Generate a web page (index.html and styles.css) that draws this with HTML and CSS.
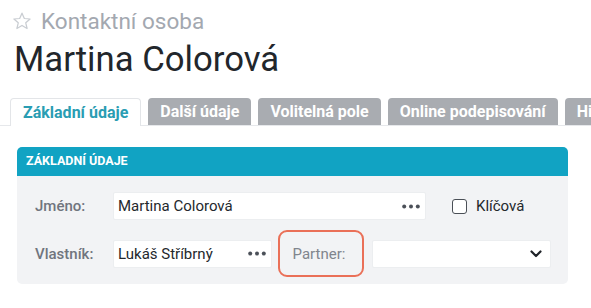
FILE: index.html
```html
<!DOCTYPE html>
<html lang="cs">
<head>
<meta charset="utf-8">
<link rel="stylesheet" href="styles.css">
</head>
<body>
<header class="page-head">
  <div class="subtitle">
    <svg class="star" width="20" height="20" viewBox="0 0 24 24"><path d="M12 2.6l2.8 6.4 6.9.6-5.2 4.6 1.6 6.8L12 17.4 5.9 21l1.6-6.8L2.3 9.6l6.9-.6z" fill="none" stroke="#c9cdd2" stroke-width="1.5" stroke-linejoin="round"/></svg>
    <span>Kontaktní osoba</span>
  </div>
  <h1 class="title">Martina Colorová</h1>
</header>

<nav class="tabs">
  <div class="tab active">Základní údaje</div>
  <div class="tab">Další údaje</div>
  <div class="tab">Volitelná pole</div>
  <div class="tab">Online podepisování</div>
  <div class="tab">Historie</div>
</nav>

<section class="panel">
  <div class="panel-head">ZÁKLADNÍ ÚDAJE</div>
  <div class="panel-body">
    <div class="row row-1">
      <label class="lbl">Jméno:</label>
      <div class="input input-name"><span>Martina Colorová</span>
        <svg class="dots" width="18" height="5" viewBox="0 0 18 5"><circle cx="2.2" cy="2.5" r="2" fill="#4b5058"/><circle cx="9" cy="2.5" r="2" fill="#4b5058"/><circle cx="15.8" cy="2.5" r="2" fill="#4b5058"/></svg>
      </div>
      <div class="check"><span class="box"></span><span>Klíčová</span></div>
    </div>
    <div class="row row-2">
      <label class="lbl">Vlastník:</label>
      <div class="input input-owner"><span>Lukáš Stříbrný</span>
        <svg class="dots" width="18" height="5" viewBox="0 0 18 5"><circle cx="2.2" cy="2.5" r="2" fill="#4b5058"/><circle cx="9" cy="2.5" r="2" fill="#4b5058"/><circle cx="15.8" cy="2.5" r="2" fill="#4b5058"/></svg>
      </div>
      <div class="partner">Partner:</div>
      <div class="input select"><span></span>
        <svg width="12" height="8" viewBox="0 0 12 8"><path d="M1.5 1.5L6 6l4.5-4.5" fill="none" stroke="#1f2328" stroke-width="2.2" stroke-linecap="round" stroke-linejoin="round"/></svg>
      </div>
    </div>
  </div>
</section>
</body>
</html>
```

FILE: styles.css
```css
html, body {
  margin: 0;
  padding: 0;
  background: #ffffff;
  font-family: Roboto, "Liberation Sans", Arial, sans-serif;
  overflow: hidden;
}

.page-head {
  padding: 8px 0 0 12px;
}

.subtitle {
  display: flex;
  align-items: center;
  gap: 9px;
  color: #a3a8b0;
  font-size: 22.5px;
  line-height: 26px;
}

.star {
  display: block;
  margin-top: -1px;
}

.title {
  margin: 5px 0 0 2px;
  font-size: 34.7px;
  font-weight: 400;
  line-height: 40px;
  color: #22262b;
  letter-spacing: 0;
}

.tabs {
  display: flex;
  align-items: flex-start;
  gap: 7px;
  margin-top: 19px;
  padding-left: 10px;
  height: 28px;
  overflow: hidden;
  white-space: nowrap;
  background: linear-gradient(#e6e8eb, #e6e8eb) left bottom / 100% 1px no-repeat;
}

.tab {
  flex: none;
  height: 27px;
  padding: 0 12px;
  box-sizing: border-box;
  border-radius: 4px 4px 0 0;
  background: #a9acb1;
  color: #ffffff;
  font-weight: 700;
  font-size: 16px;
  line-height: 28px;
}

.tab.active {
  background: #ffffff;
  color: #2a9db3;
  border: 1px solid #e3e5e8;
  border-bottom: none;
  height: 28px;
  line-height: 27px;
  padding: 0 12px;
}

.panel {
  margin: 21px 0 0 17px;
  width: 551px;
}

.panel-head {
  height: 29px;
  background: #11a3c3;
  border-radius: 5px 5px 0 0;
  color: #ffffff;
  font-weight: 700;
  font-size: 12.5px;
  line-height: 27px;
  padding-left: 9px;
}

.panel-body {
  background: #f2f3f5;
  border-radius: 0 0 5px 5px;
  padding: 16px 0 7px 18px;
  display: flex;
  flex-direction: column;
  gap: 10px;
}

.row {
  display: flex;
  align-items: center;
}

.lbl {
  width: 78px;
  flex: none;
  color: #70757e;
  font-weight: 500;
  font-size: 15px;
}

.input {
  display: flex;
  align-items: center;
  justify-content: space-between;
  height: 28px;
  box-sizing: border-box;
  background: #ffffff;
  border: 1px solid #eceef0;
  border-radius: 2px;
  padding: 0 5px 0 4px;
  font-size: 15px;
  color: #24282d;
}

.dots {
  display: block;
}

.input-name {
  width: 313px;
}

.check {
  display: flex;
  align-items: center;
  gap: 9px;
  margin-left: 26px;
  font-size: 15px;
  color: #24282d;
}

.box {
  width: 15px;
  height: 15px;
  box-sizing: border-box;
  border: 1.5px solid #4a4f56;
  border-radius: 3px;
  background: #ffffff;
}

.input-owner {
  width: 159px;
}

.partner {
  margin-left: 6px;
  width: 86px;
  height: 47px;
  box-sizing: border-box;
  border: 2.5px solid #ea7058;
  border-radius: 9px;
  padding-left: 12.5px;
  display: flex;
  align-items: center;
  color: #80858d;
  font-size: 15px;
}

.select {
  width: 179px;
  margin-left: 8px;
  padding-right: 8px;
}

.select svg {
  display: block;
}
```
